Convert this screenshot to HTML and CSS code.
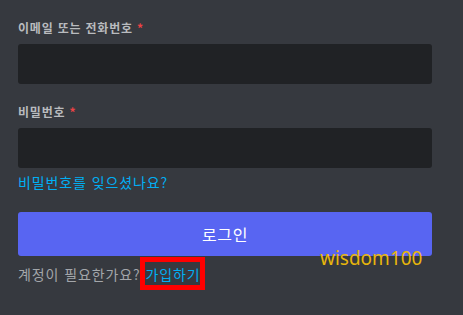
FILE: index.html
```html
<!DOCTYPE html>
<html lang="ko">
<head>
<meta charset="utf-8">
<link rel="stylesheet" href="styles.css">
</head>
<body>
<main class="form">
  <div class="field">
    <label class="label">이메일 또는 전화번호 <span class="req">*</span></label>
    <div class="input"></div>
  </div>
  <div class="field last">
    <label class="label">비밀번호 <span class="req">*</span></label>
    <div class="input"></div>
  </div>
  <a class="forgot">비밀번호를 잊으셨나요?</a>
  <div class="button-row">
    <button class="login">로그인</button>
    <span class="watermark">wisdom100</span>
  </div>
  <div class="need">계정이 필요한가요? <a class="register">가입하기</a></div>
</main>
</body>
</html>
```
FILE: styles.css
```css
html, body {
  margin: 0;
  padding: 0;
  background: #36393f;
}
body {
  width: 463px;
  height: 315px;
  overflow: hidden;
  font-family: "Noto Sans CJK KR", "Noto Sans", sans-serif;
}
.form {
  padding: 20px 31px 0 18px;
  display: flex;
  flex-direction: column;
}
.field {
  display: flex;
  flex-direction: column;
  margin-bottom: 20px;
}
.field.last {
  margin-bottom: 0;
}
.label {
  font-size: 12px;
  line-height: 16px;
  font-weight: 700;
  letter-spacing: 0.8px;
  color: #b9bbbe;
  margin-bottom: 8px;
}
.req {
  color: #ed4245;
}
.input {
  height: 40px;
  background: #202225;
  border-radius: 3px;
}
.forgot {
  margin-top: 4px;
  font-size: 14px;
  line-height: 20px;
  letter-spacing: 0.9px;
  color: #00aff4;
  align-self: flex-start;
}
.button-row {
  position: relative;
  margin-top: 20px;
}
.login {
  display: block;
  width: 100%;
  height: 44px;
  border: 0;
  border-radius: 3px;
  background: #5865f2;
  color: #fff;
  font-family: inherit;
  font-size: 16px;
  font-weight: 400;
  letter-spacing: 0.6px;
  padding: 0;
}
.watermark {
  position: absolute;
  left: 302px;
  top: 34px;
  font-family: "Noto Sans", sans-serif;
  font-size: 19px;
  line-height: 24px;
  color: #e8b60c;
}
.need {
  margin-top: 8px;
  font-size: 14px;
  line-height: 20px;
  letter-spacing: 0.9px;
  color: #a3a6aa;
}
.register {
  position: relative;
  color: #00aff4;
  letter-spacing: 0.9px;
}
.register::after {
  content: "";
  position: absolute;
  left: -5px;
  right: -4px;
  top: -7px;
  bottom: -6px;
  border: 5px solid #ff0000;
}
```
